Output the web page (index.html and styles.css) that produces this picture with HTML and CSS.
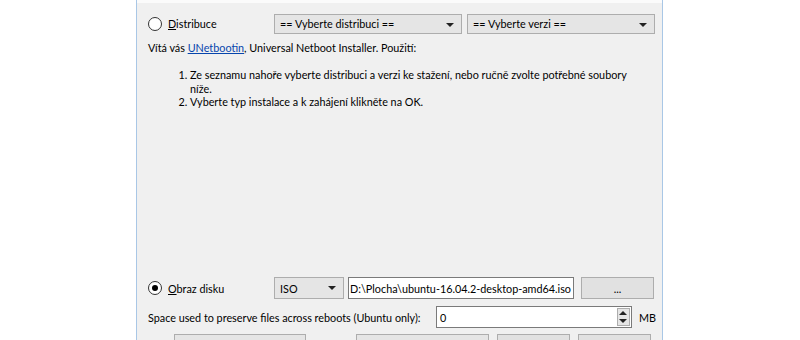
FILE: index.html
```html
<!DOCTYPE html>
<html lang="cs">
<head>
  <meta charset="UTF-8">
  <title>UNetbootin</title>
  <link rel="stylesheet" href="styles.css">
</head>
<body>
  <div class="window">
    <div class="top-strip"></div>

    <div class="row row-dist">
      <label class="radio-label">
        <span class="radio"></span>
        <span><u>D</u>istribuce</span>
      </label>
      <div class="combo combo-dist">== Vyberte distribuci ==<span class="arrow"></span></div>
      <div class="combo combo-ver">== Vyberte verzi ==<span class="arrow"></span></div>
    </div>

    <p class="intro">Vítá vás <a href="#">UNetbootin</a>, Universal Netboot Installer. Použití:</p>
    <ol class="steps">
      <li>Ze seznamu nahoře vyberte distribuci a verzi ke stažení, nebo ručně zvolte potřebné soubory<br>níže.</li>
      <li>Vyberte typ instalace a k zahájení klikněte na OK.</li>
    </ol>

    <div class="spacer"></div>

    <div class="row row-disk">
      <label class="radio-label">
        <span class="radio checked"></span>
        <span><u>O</u>braz disku</span>
      </label>
      <div class="combo combo-iso">ISO<span class="arrow"></span></div>
      <div class="field field-path"><span>D:\Plocha\ubuntu-16.04.2-desktop-amd64.iso</span></div>
      <div class="button btn-browse">...</div>
    </div>

    <div class="row row-space">
      <span class="space-label">Space used to preserve files across reboots (Ubuntu only):</span>
      <div class="field field-spin">0
        <span class="spin"><span class="up"></span><span class="down"></span></span>
      </div>
      <span class="unit">MB</span>
    </div>

    <div class="row row-bottom">
      <span class="small-label">Typ:</span>
      <div class="combo combo-type">Jednotka USB<span class="arrow"></span></div>
      <span class="small-label label-drive">Jednotka:</span>
      <div class="combo combo-drive">E:\<span class="arrow"></span></div>
      <div class="button btn-ok">OK</div>
      <div class="button btn-quit">Ukončit</div>
    </div>
  </div>
</body>
</html>
```

FILE: styles.css
```css
html, body {
  margin: 0;
  height: 340px;
  overflow: hidden;
  background: #ffffff;
}
body {
  font-family: Lato, "Open Sans", sans-serif;
  font-size: 10.8px;
  color: #000000;
}
.window {
  margin-left: 136px;
  width: 525px;
  height: 340px;
  background: #f0f0f0;
  border-left: 1px solid #a9c7e6;
  border-right: 1px solid #a9c7e6;
  display: flex;
  flex-direction: column;
  overflow: hidden;
}
.top-strip {
  height: 3px;
  background: #fbfbfb;
}
.row {
  display: flex;
  align-items: center;
  padding-left: 11px;
  white-space: nowrap;
}
.row-dist {
  margin-top: 10px;
  height: 21px;
}
.radio-label {
  display: flex;
  align-items: center;
  width: 126px;
  gap: 6px;
}
.radio {
  width: 12px;
  height: 12px;
  border: 1px solid #333333;
  border-radius: 50%;
  background: #ffffff;
  position: relative;
}
.radio.checked::after {
  content: "";
  position: absolute;
  left: 3px;
  top: 3px;
  width: 6px;
  height: 6px;
  border-radius: 50%;
  background: #000000;
}
.combo {
  height: 20px;
  box-sizing: border-box;
  border: 1px solid #adadad;
  background: #e5e5e5;
  display: flex;
  align-items: center;
  padding-left: 5px;
  position: relative;
}
.arrow {
  position: absolute;
  right: 7px;
  top: 8px;
  border-left: 4px solid transparent;
  border-right: 4px solid transparent;
  border-top: 4px solid #222222;
}
.combo-dist { width: 188px; }
.combo-ver { width: 188px; margin-left: 5px; }

.intro {
  margin: 7px 0 0 11px;
  line-height: 14px;
}
.intro a {
  color: #0645ad;
}
.steps {
  margin: 13px 0 0 0;
  padding-left: 53px;
  line-height: 13.5px;
  white-space: nowrap;
}
.spacer { flex: 1; }

.row-disk {
  height: 22px;
}
.combo-iso {
  width: 70px;
  height: 22px;
}
.field {
  height: 22px;
  box-sizing: border-box;
  border: 1px solid #7a7a7a;
  background: #ffffff;
  display: flex;
  align-items: center;
  padding-left: 3px;
  overflow: hidden;
}
.field-path {
  width: 226px;
  margin-left: 4px;
  justify-content: flex-end;
  padding-right: 2px;
}
.field-path span {
  flex-shrink: 0;
}
.button {
  height: 22px;
  box-sizing: border-box;
  border: 1px solid #adadad;
  background: #e1e1e1;
  display: flex;
  align-items: center;
  justify-content: center;
}
.btn-browse {
  width: 73px;
  margin-left: 7px;
}

.row-space {
  margin-top: 7px;
  height: 22px;
}
.space-label {
  width: 288px;
}
.field-spin {
  width: 196px;
  position: relative;
}
.spin {
  position: absolute;
  right: 1px;
  top: 1px;
  width: 13px;
  height: 18px;
  border: 1px solid #adadad;
  background: #e5e5e5;
  box-sizing: border-box;
}
.spin .up, .spin .down {
  position: absolute;
  left: 1px;
  border-left: 4px solid transparent;
  border-right: 4px solid transparent;
}
.spin .up { top: 2px; border-bottom: 4px solid #222222; }
.spin .down { bottom: 2px; border-top: 4px solid #222222; }
.unit {
  margin-left: 7px;
}

.row-bottom {
  margin-top: 6px;
  height: 22px;
  align-items: flex-start;
  margin-bottom: -16px;
}
.small-label {
  width: 26px;
  padding-top: 4px;
}
.combo-type { width: 132px; height: 22px; }
.label-drive {
  width: 50px;
  padding-left: 10px;
  box-sizing: border-box;
}
.combo-drive { width: 133px; height: 22px; }
.btn-ok { width: 73px; margin-left: 8px; }
.btn-quit { width: 73px; margin-left: 8px; }
```
